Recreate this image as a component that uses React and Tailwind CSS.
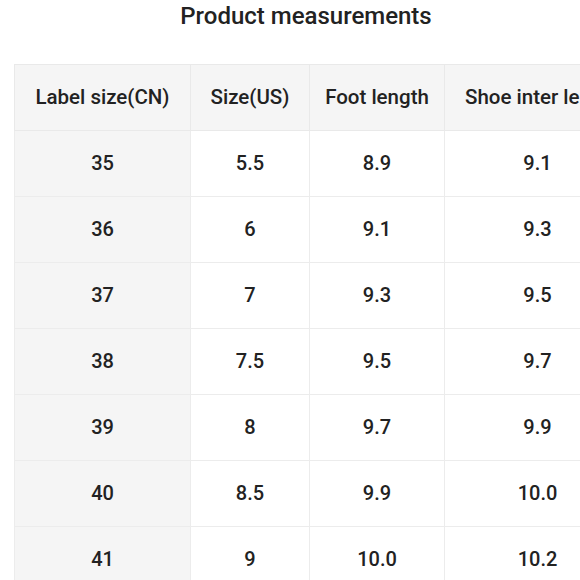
import React from 'react';

const rows = [
    ['35', '5.5', '8.9', '9.1'],
    ['36', '6', '9.1', '9.3'],
    ['37', '7', '9.3', '9.5'],
    ['38', '7.5', '9.5', '9.7'],
    ['39', '8', '9.7', '9.9'],
    ['40', '8.5', '9.9', '10.0'],
    ['41', '9', '10.0', '10.2'],
];

const headers = ['Label size(CN)', 'Size(US)', 'Foot length', 'Shoe inter length'];
const widths = ['w-[176px]', 'w-[119px]', 'w-[135px]', 'w-[186px]'];

function App() {
    return (
        <div
            className="w-[580px] h-[580px] overflow-hidden bg-white text-[#222]"
            style={{ fontFamily: 'Roboto, "Noto Sans", sans-serif' }}
        >
            <h1 className="text-center text-[24px] font-medium leading-[30px] pt-[1px] pl-[32px]">
                Product measurements
            </h1>

            <div className="mt-[33px] ml-[14px]">
                <table className="border-collapse table-fixed w-[616px]">
                    <thead>
                        <tr className="h-[66px] bg-[#f5f5f5]">
                            {headers.map((h, i) => (
                                <th
                                    key={h}
                                    className={`${widths[i]} border border-[#e9e9e9] font-medium text-[20.5px] whitespace-nowrap overflow-hidden ${
                                        i === 3 ? 'text-left pl-[20px]' : 'text-center'
                                    }`}
                                >
                                    {h}
                                </th>
                            ))}
                        </tr>
                    </thead>
                    <tbody>
                        {rows.map((r) => (
                            <tr key={r[0]} className="h-[66px]">
                                {r.map((cell, i) => (
                                    <td
                                        key={i}
                                        className={`border border-[#ececec] text-center text-[20px] font-medium pb-[2px] ${
                                            i === 0 ? 'bg-[#f5f5f5]' : 'bg-white'
                                        }`}
                                    >
                                        {cell}
                                    </td>
                                ))}
                            </tr>
                        ))}
                    </tbody>
                </table>
            </div>
        </div>
    );
}

export default App;
